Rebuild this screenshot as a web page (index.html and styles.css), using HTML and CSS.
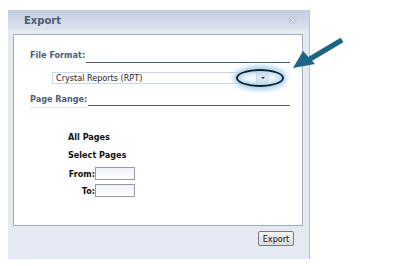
FILE: index.html
```html
<!DOCTYPE html>
<html lang="en">
<head>
    <meta charset="UTF-8">
    <title>Export</title>
    <link rel="stylesheet" href="styles.css">
</head>
<body>
    <div class="dialog">
        <div class="titlebar">
            <span class="title">Export</span>
            <span class="close">&#x2715;</span>
        </div>

        <div class="content">
            <div class="panel">
                <div class="section-head">
                    <span class="section-label">File Format:</span>
                    <span class="rule"></span>
                </div>

                <div class="format-row">
                    <div class="format-select">Crystal Reports (RPT)</div>
                    <div class="drop-button"><span class="caret"></span></div>
                    <span class="highlight"></span>
                </div>

                <div class="section-head range-head">
                    <span class="section-label">Page Range:</span>
                    <span class="rule"></span>
                </div>

                <div class="range-options">
                    <div class="option">All Pages</div>
                    <div class="option">Select Pages</div>
                    <div class="page-field">
                        <label for="from-page">From:</label>
                        <input type="text" id="from-page">
                    </div>
                    <div class="page-field">
                        <label for="to-page">To:</label>
                        <input type="text" id="to-page">
                    </div>
                </div>
            </div>

            <div class="footer">
                <button type="button" class="export-button">Export</button>
            </div>
        </div>
    </div>

    <!-- pointer arrow at the dropdown -->
    <svg class="pointer" width="60" height="40" viewBox="0 0 60 40">
        <path d="M52 4 L20 23" stroke="#1c6585" stroke-width="5.5" stroke-linecap="butt"/>
        <path d="M3 32 L13 15 L25 28 Z" fill="#1c6585"/>
    </svg>
</body>
</html>
```

FILE: styles.css
```css
/* Export dialog */
body {
    margin: 0;
    padding: 10px 0 0 8px;
    background-color: #ffffff;
    font-family: Tahoma, "DejaVu Sans", sans-serif;
    position: relative;
}

.dialog {
    width: 301px;
    height: 249px;
    background-color: #e5e9f2;
    border-right: 1px solid #b3c0d6;
}

.titlebar {
    height: 20px;
    display: flex;
    align-items: center;
    justify-content: space-between;
    padding: 0 12px 0 16px;
    background: linear-gradient(#c1cde0, #dde4ef);
}

.title {
    font-family: "DejaVu Sans", sans-serif;
    font-size: 10px;
    font-weight: bold;
    color: #4d5b77;
}

.close {
    font-family: "DejaVu Sans", sans-serif;
    font-size: 10px;
    font-weight: bold;
    color: #f6f8fb;
    text-shadow: 0 0 1px #6f7c94, 0 0 1px #6f7c94;
}

.content {
    padding: 4px 6px 0 5px;
}

.panel {
    height: 190px;
    background-color: #ffffff;
    border: 1px solid #9dadc8;
    padding: 0 12px 0 16px;
    position: relative;
}

/* section headings with a rule */
.section-head {
    display: flex;
    align-items: flex-end;
    margin-top: 14px;
}

.section-label {
    font-family: "DejaVu Sans Condensed", "DejaVu Sans", sans-serif;
    font-size: 9px;
    font-weight: bold;
    color: #4e5d78;
    line-height: 12px;
}

.rule {
    flex-grow: 1;
    border-bottom: 1px solid #4f5a6c;
    margin-left: 1px;
    margin-bottom: -2px;
}

.range-head {
    margin-top: 9px;
}

.range-head .section-label {
    border-bottom: 1px solid #e2e6ee;
    padding-bottom: 2px;
}

.range-head .rule {
    margin-bottom: 2px;
}

/* format dropdown */
.format-row {
    display: flex;
    margin: 11px 0 0 22px;
    position: relative;
}

.format-select {
    width: 197px;
    height: 10px;
    border: 1px solid #c9d7ec;
    padding: 0 3px;
    font-family: "DejaVu Sans Condensed", "DejaVu Sans", sans-serif;
    font-size: 9px;
    line-height: 10px;
    color: #1e1e1e;
}

.drop-button {
    width: 12px;
    height: 12px;
    background-color: #e3e8f1;
    display: flex;
    align-items: center;
    justify-content: center;
}

.caret {
    border-left: 2px solid transparent;
    border-right: 2px solid transparent;
    border-top: 2px solid #222222;
}

.highlight {
    position: absolute;
    left: 184px;
    top: -3px;
    width: 44px;
    height: 14px;
    border: 2px solid #12202e;
    border-radius: 50%;
    box-shadow: 0 0 5px 3px #a3d1ec, inset 0 0 5px 3px #b7dcf2;
}

/* page range options */
.range-options {
    margin: 20px 0 0 38px;
    font-family: "DejaVu Sans Condensed", "DejaVu Sans", sans-serif;
    font-size: 9px;
    font-weight: bold;
    color: #111111;
}

.option {
    height: 18px;
    line-height: 18px;
}

.page-field {
    display: flex;
    align-items: center;
    height: 15px;
    margin-top: 2px;
}

.page-field label {
    width: 27px;
    text-align: right;
}

.page-field input {
    width: 38px;
    height: 11px;
    padding: 0;
    margin: 0;
    border: 1px solid #9a9a9a;
    background: linear-gradient(#eef2f8, #ffffff);
}

.footer {
    display: flex;
    justify-content: flex-end;
    padding: 5px 9px 0 0;
}

.export-button {
    width: 36px;
    height: 15px;
    padding: 0;
    font-family: "DejaVu Sans Condensed", "DejaVu Sans", sans-serif;
    font-size: 9px;
    color: #111111;
    border: 1px solid #7a7a7a;
    border-radius: 2px;
    background: linear-gradient(#f4f4f4, #dcdcdc);
}

.pointer {
    position: absolute;
    left: 290px;
    top: 36px;
}
```
